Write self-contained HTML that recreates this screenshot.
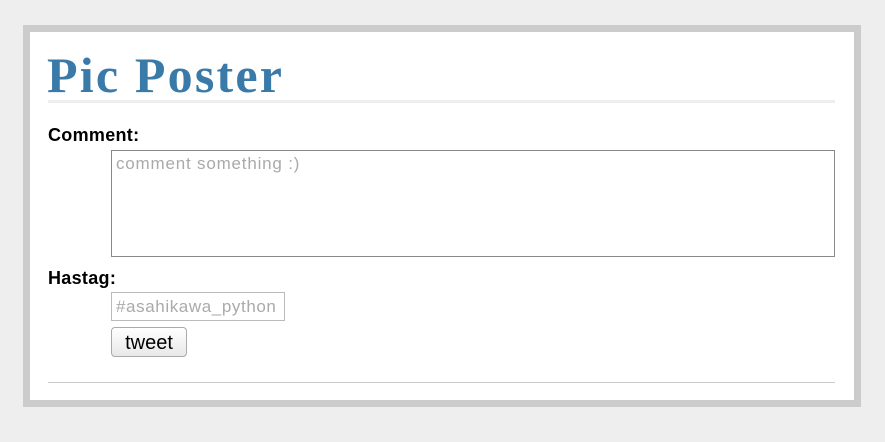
<!DOCTYPE html>
<html><head><style>
body{margin:0;background:#eee;width:885px;height:442px;position:relative;overflow:hidden;font-family:"Liberation Sans",sans-serif}
.box{position:absolute;left:23px;top:25px;width:824px;height:368px;border:7px solid #ccc;background:#fff}
.t{position:absolute;left:47px;top:46px;font-family:"Liberation Serif",serif;font-weight:bold;font-size:50px;color:#3a7aa8;line-height:58px;letter-spacing:2.2px}
.u{position:absolute;left:48px;top:100px;width:787px;height:3px;background:#eee}
.l{position:absolute;left:48px;font-weight:bold;font-size:18px;color:#000;letter-spacing:0.3px}
.ta{position:absolute;left:111px;top:150px;width:722px;height:105px;border:1px solid #888;box-sizing:content-box}
.ph{position:absolute;font-size:17px;letter-spacing:0.8px;color:#aaa}
.in{position:absolute;left:111px;top:292px;width:172px;height:27px;border:1px solid #bbb}
.btn{position:absolute;left:111px;top:327px;width:74px;height:28px;border:1px solid #aaa;border-radius:4px;background:linear-gradient(#fff,#e8e8e8);font-size:20px;text-align:center;line-height:30px}
.hr{position:absolute;left:48px;top:382px;width:787px;height:1px;background:#ccc}
</style></head><body>
<div class="box"></div>
<div class="t">Pic Poster</div>
<div class="u"></div>
<div class="l" style="top:125px">Comment:</div>
<div class="ta"></div>
<div class="ph" style="left:116px;top:154px">comment something :)</div>
<div class="l" style="top:268px">Hastag:</div>
<div class="in"></div>
<div class="ph" style="left:116px;top:297px;letter-spacing:0.6px">#asahikawa_python</div>
<div class="btn">tweet</div>
<div class="hr"></div>
</body></html>
